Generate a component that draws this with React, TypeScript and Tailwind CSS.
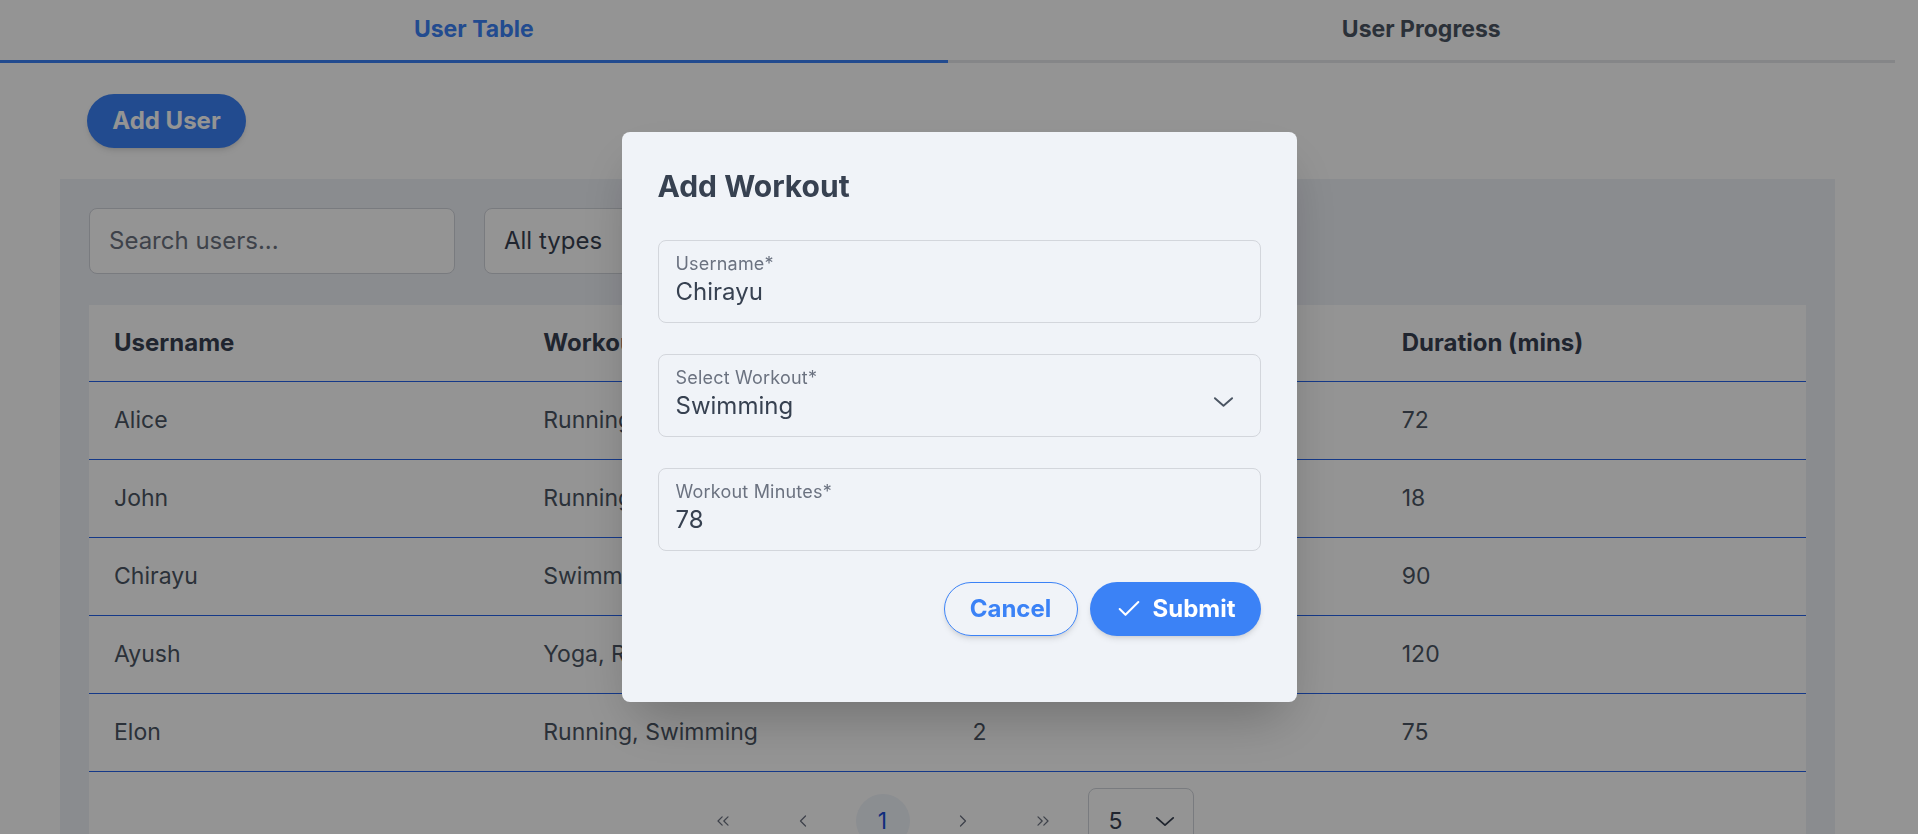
import React from 'react';
import { Check, ChevronLeft, ChevronRight, ChevronsLeft, ChevronsRight } from 'lucide-react';

const rows = [
  { name: 'Alice', workouts: 'Running, Cycling', count: 2, minutes: 72 },
  { name: 'John', workouts: 'Running', count: 1, minutes: 18 },
  { name: 'Chirayu', workouts: 'Swimming', count: 1, minutes: 90 },
  { name: 'Ayush', workouts: 'Yoga, Running', count: 2, minutes: 120 },
  { name: 'Elon', workouts: 'Running, Swimming', count: 2, minutes: 75 },
];

// wide, thin chevron like the MUI select arrow
const Caret = ({ className }: { className?: string }) => (
  <svg viewBox="0 0 22 12" className={className} fill="none" stroke="currentColor" strokeWidth={2} strokeLinecap="round" strokeLinejoin="round">
    <polyline points="2,2 11,10 20,2" />
  </svg>
);

const Field = ({ label, value, select }: { label: string; value: string; select?: boolean }) => (
  <div className="h-[83px] rounded-lg border border-[#d3d6dc] pl-[17px] pr-[26px] pt-[12px] flex items-center justify-between">
    <div className="flex flex-col self-start">
      <span className="text-[18px] leading-[22px] text-[#6b7280] tracking-[0.2px]">{label}</span>
      <span className="text-[24px] leading-[32px] text-[#374151] mt-[1px]">{value}</span>
    </div>
    {select && <Caret className="w-[21px] h-[12px] text-[#4b5563]" />}
  </div>
);

export default function App() {
  return (
    <div className="min-h-screen bg-white overflow-hidden" style={{ fontFamily: 'Inter, "Noto Sans", sans-serif' }}>
      {/* tabs */}
      <div className="flex w-[1895px]">
        <button className="flex-1 h-[63px] border-b-[3px] border-[#3b82f6] text-[23px] font-bold text-[#3b82f6] pb-[2px]">
          User Table
        </button>
        <button className="flex-1 h-[63px] border-b-[3px] border-[#e5e7eb] text-[23px] font-bold text-[#4b5563] pb-[2px]">
          User Progress
        </button>
      </div>

      <div className="pl-[87px] pt-[31px]">
        <button className="h-[54px] w-[159px] rounded-full bg-[#3b82f6] text-white text-[24px] font-bold shadow-md">
          Add User
        </button>
      </div>

      {/* panel */}
      <div className="ml-[60px] mt-[31px] w-[1775px] bg-[#eef1f7] px-[29px] pt-[29px] pb-8">
        <div className="flex gap-[29px]">
          <div className="w-[366px] h-[66px] rounded-lg border border-[#d1d5db] bg-white flex items-center px-[19px] text-[24px] text-[#6b7280]">
            Search users...
          </div>
          <div className="w-[260px] h-[66px] rounded-lg border border-[#d1d5db] bg-white flex items-center px-[19px] text-[24px] text-[#374151]">
            All types
          </div>
        </div>

        <div className="mt-[31px] bg-white">
          <div className="grid grid-cols-4 h-[77px] items-center border-b border-[#2563eb] text-[24px] font-bold text-[#374151]">
            <div className="pl-[25px]">Username</div>
            <div className="pl-[25px]">Workouts</div>
            <div className="pl-[25px]">Workouts Count</div>
            <div className="pl-[25px]">Duration (mins)</div>
          </div>
          {rows.map((r) => (
            <div key={r.name} className="grid grid-cols-4 h-[78px] items-center border-b border-[#2563eb] text-[23px] text-[#4b5563]">
              <div className="pl-[25px]">{r.name}</div>
              <div className="pl-[25px]">{r.workouts}</div>
              <div className="pl-[25px]">{r.count}</div>
              <div className="pl-[25px]">{r.minutes}</div>
            </div>
          ))}
          <div className="flex justify-center items-center gap-[26px] pt-[16px] pb-4 pr-[6px]">
            <button className="w-[54px] h-[54px] flex items-center justify-center text-[#6b7280]"><ChevronsLeft className="w-5 h-5" strokeWidth={1.5} /></button>
            <button className="w-[54px] h-[54px] flex items-center justify-center text-[#6b7280]"><ChevronLeft className="w-5 h-5" strokeWidth={1.5} /></button>
            <button className="w-[54px] h-[54px] rounded-full bg-[#f0f4fa] flex items-center justify-center text-[23px] text-[#1d4ed8]">1</button>
            <button className="w-[54px] h-[54px] flex items-center justify-center text-[#6b7280]"><ChevronRight className="w-5 h-5" strokeWidth={1.5} /></button>
            <button className="w-[54px] h-[54px] flex items-center justify-center text-[#6b7280]"><ChevronsRight className="w-5 h-5" strokeWidth={1.5} /></button>
            <div className="-ml-[8px] w-[106px] h-[66px] rounded-lg border border-[#d1d5db] flex items-center justify-between pl-[20px] pr-[18px] text-[23px] text-[#374151]">
              5 <Caret className="w-[20px] h-[11px] text-[#374151]" />
            </div>
          </div>
        </div>
      </div>

      {/* modal */}
      <div className="fixed inset-0 bg-[rgba(0,0,0,0.42)] flex items-center justify-center">
        <div className="w-[675px] h-[570px] bg-[#f0f3f8] rounded-lg shadow-2xl px-[36px] pt-[36px]">
          <h2 className="text-[30px] leading-[36px] font-bold text-[#374151]">Add Workout</h2>
          <div className="mt-[36px] flex flex-col gap-[31px]">
            <Field label="Username*" value="Chirayu" />
            <Field label="Select Workout*" value="Swimming" select />
            <Field label="Workout Minutes*" value="78" />
          </div>
          <div className="mt-[31px] flex justify-end gap-[12px]">
            <button className="w-[134px] h-[54px] rounded-full border border-[#3b82f6] text-[#3b82f6] text-[24px] font-bold shadow-md">
              Cancel
            </button>
            <button className="w-[171px] h-[54px] rounded-full bg-[#3b82f6] text-white text-[24px] font-bold shadow-md flex items-center justify-center gap-[10px]">
              <Check className="w-7 h-7" strokeWidth={1.75} />
              Submit
            </button>
          </div>
        </div>
      </div>
    </div>
  );
}
